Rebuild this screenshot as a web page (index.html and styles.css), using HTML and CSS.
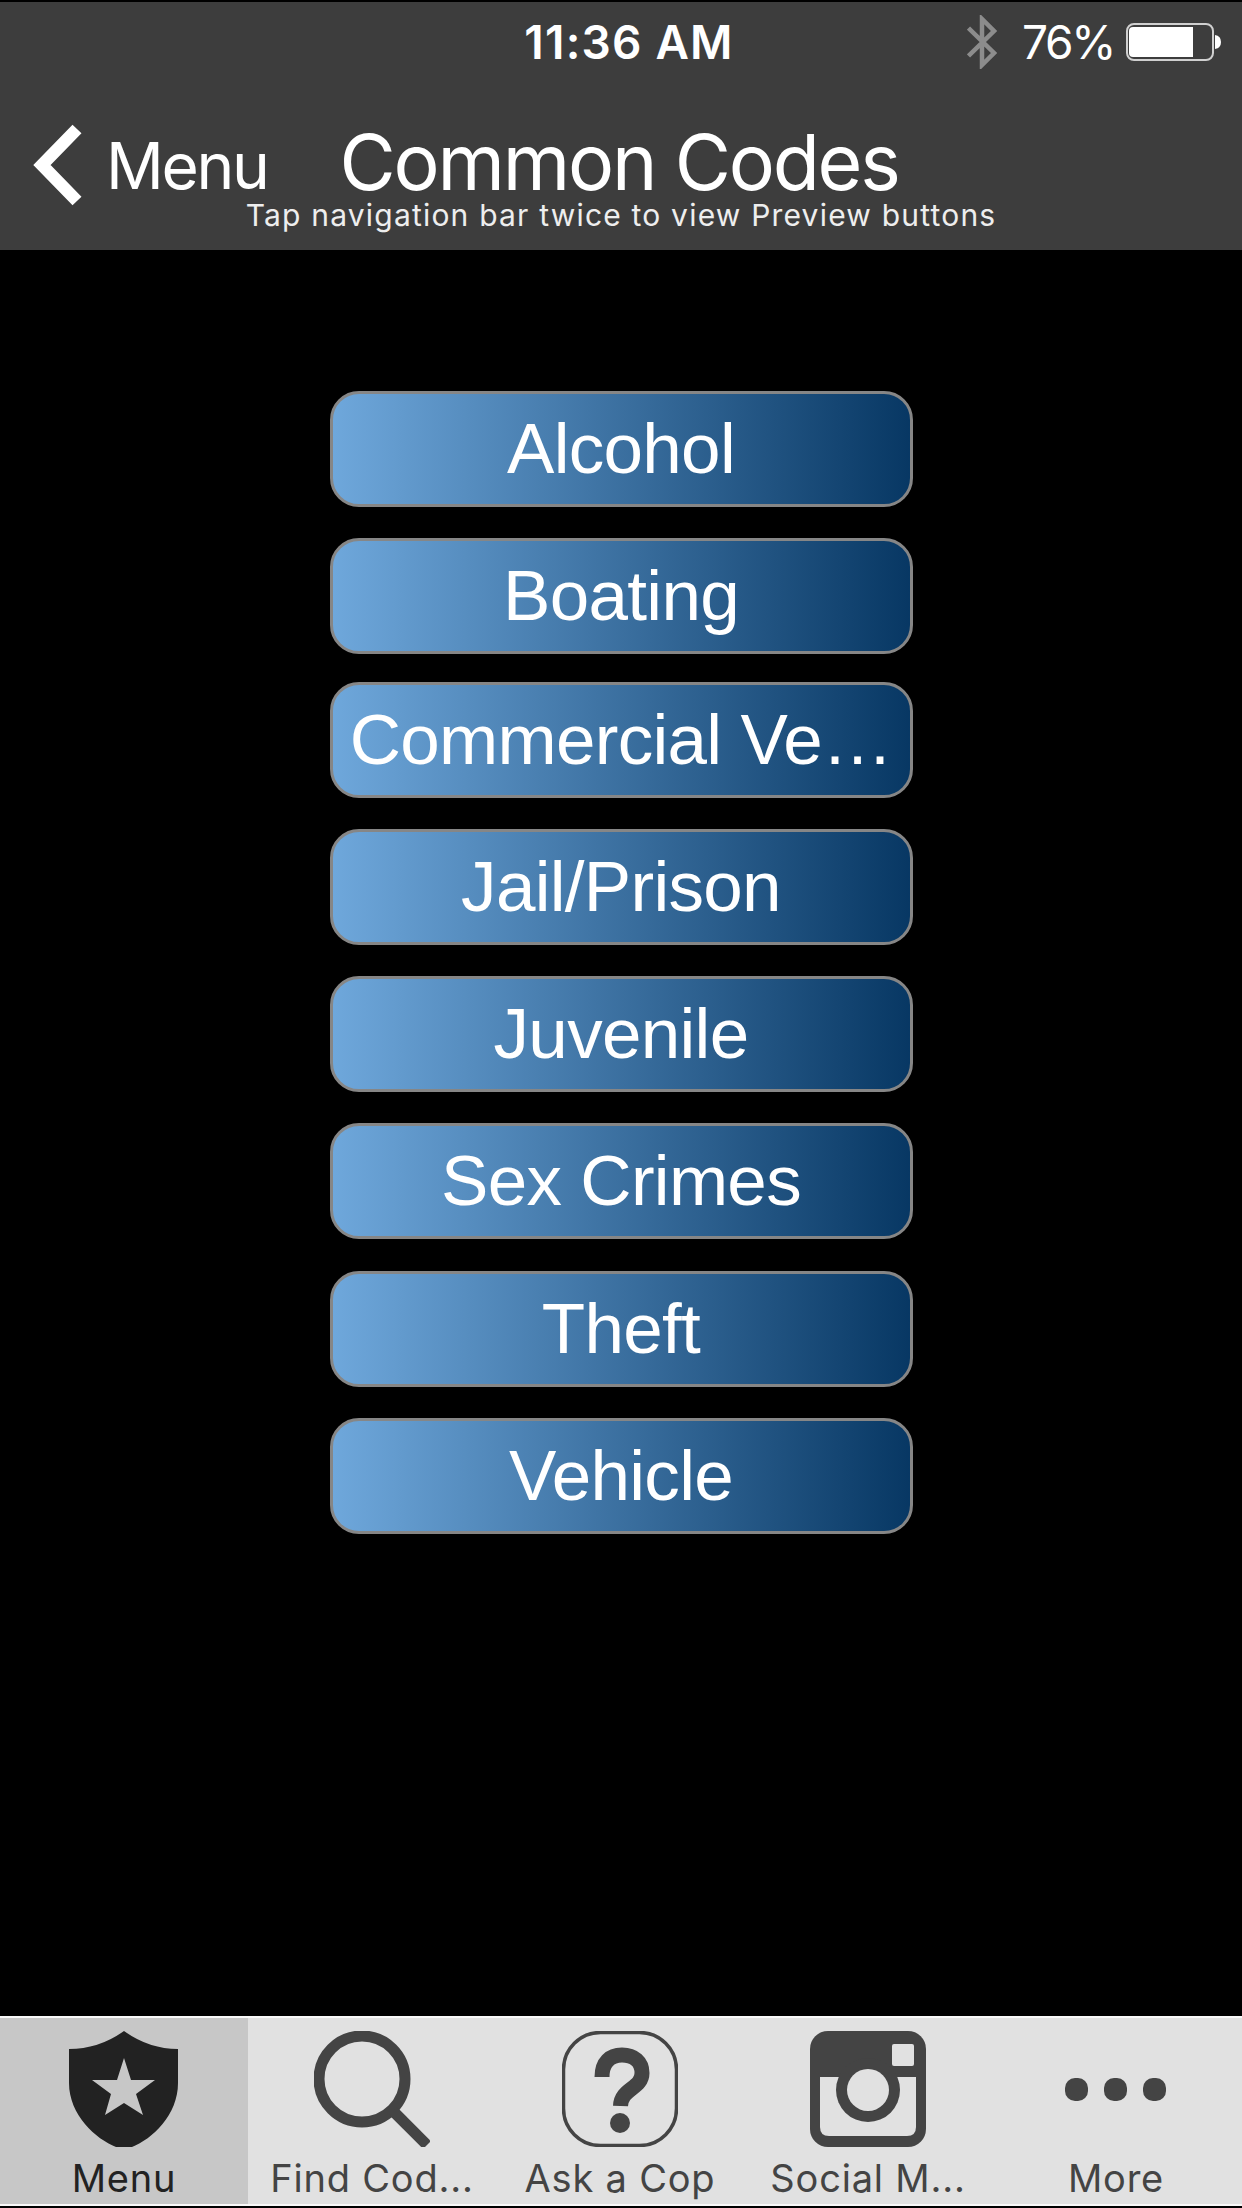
FILE: index.html
```html
<!DOCTYPE html>
<html lang="en">
<head>
    <meta charset="UTF-8">
    <meta name="viewport" content="width=device-width, initial-scale=1.0">
    <title>Common Codes</title>
    <link rel="stylesheet" href="styles.css">
</head>
<body>

    <div class="app">
        <!-- Header -->
        <header class="header">
            <div class="status-bar">
                <span class="side"></span>
                <span class="time">11:36 AM</span>
                <div class="side status-right">
                    <svg class="bluetooth" viewBox="0 0 30 54" width="30" height="54">
                        <path d="M1.500 13 L27 38 L15 50 V4 L27 16 L1.500 41" />
                    </svg>
                    <span class="percent">76%</span>
                    <svg class="battery" viewBox="0 0 96 38" width="96" height="38">
                        <rect class="battery-case" x="1" y="1" width="86" height="36" rx="7" />
                        <path class="battery-fill" d="M7 4 H67 V34 H7 Q3 34 3 30 V8 Q3 4 7 4 Z" />
                        <path class="battery-fill" d="M89 12 Q95 13 95 19 Q95 25 89 26 Z" />
                    </svg>
                </div>
            </div>

            <div class="nav-bar">
                <a class="back" href="#">
                    <svg viewBox="0 0 50 82" width="50" height="82">
                        <path d="M45 5 L10 41 L45 77" />
                    </svg>
                    <span>Menu</span>
                </a>
                <h1>Common Codes</h1>
                <span class="spacer"></span>
            </div>
            <p class="hint">Tap navigation bar twice to view Preview buttons</p>
        </header>

        <!-- Code categories -->
        <main class="codes">
            <button type="button">Alcohol</button>
            <button type="button">Boating</button>
            <button type="button" class="long">Commercial Ve…</button>
            <button type="button">Jail/Prison</button>
            <button type="button">Juvenile</button>
            <button type="button">Sex Crimes</button>
            <button type="button">Theft</button>
            <button type="button">Vehicle</button>
        </main>

        <!-- Tab Bar -->
        <nav class="tabs">
            <a class="tab active" href="#">
                <svg viewBox="0 0 116 116">
                    <path class="solid" d="M58 0 Q83 18 112 18 V52 C112 84 86 108 66 116 H50 C30 108 3 84 3 52 V18 Q33 18 58 0 Z" />
                    <path class="star" d="M58 27 L65 49 L89 49 L70 63 L77 84 L58 72 L39 84 L45 63 L26 49 L51 49 Z" />
                </svg>
                <span>Menu</span>
            </a>
            <a class="tab find" href="#">
                <svg viewBox="0 0 116 116">
                    <circle class="line" cx="48" cy="48" r="43" stroke-width="11" />
                    <path class="line" d="M79 80 L113 114" stroke-width="11" />
                </svg>
                <span>Find Cod...</span>
            </a>
            <a class="tab ask" href="#">
                <svg viewBox="0 0 116 116">
                    <rect class="line" x="1.500" y="1.500" width="113" height="113" rx="37" stroke-width="3.500" />
                    <path class="line" d="M40 46 C40 31 48 24 60 24 C72 24 80 31 80 42 C80 58 59 57 58.500 75" stroke-width="15" />
                    <circle class="solid" cx="58" cy="92" r="10" />
                </svg>
                <span>Ask a Cop</span>
            </a>
            <a class="tab social" href="#">
                <svg viewBox="0 0 116 116">
                    <rect class="solid" width="116" height="116" rx="18" />
                    <path class="hole" d="M10 46 H106 V96 Q106 105 97 105 H19 Q10 105 10 96 Z" />
                    <circle class="solid" cx="58" cy="59" r="32" />
                    <circle class="hole" cx="58" cy="59" r="21" />
                    <rect class="hole" x="82" y="13" width="22" height="22" rx="2" />
                </svg>
                <span>Social M...</span>
            </a>
            <a class="tab more" href="#">
                <svg viewBox="0 0 116 116">
                    <rect class="solid" x="7" y="47" width="23" height="23" rx="10" />
                    <rect class="solid" x="46" y="47" width="23" height="23" rx="10" />
                    <rect class="solid" x="85" y="47" width="23" height="23" rx="10" />
                </svg>
                <span>More</span>
            </a>
        </nav>
    </div>

</body>
</html>
```
FILE: styles.css
```css
* {
    margin: 0;
    padding: 0;
    box-sizing: border-box;
}

body {
    background-color: #000;
    font-family: 'Inter', sans-serif;
}

a {
    color: inherit;
    text-decoration: none;
}

svg {
    display: block;
    flex: none;
}

.app {
    display: flex;
    flex-direction: column;
    width: 1242px;
    height: 2208px;
    padding: 2px 0;
    background-color: #000;
    overflow: hidden;
}

/* Header */
.header {
    height: 248px;
    background-color: #3d3d3d;
    color: #fff;
}

.status-bar {
    display: flex;
    align-items: center;
    height: 80px;
    padding: 0 20px 0 36px;
}

.side {
    flex: 1;
}

.time {
    font-size: 46px;
    font-weight: 600;
    letter-spacing: 1.2px;
}

.status-right {
    display: flex;
    justify-content: flex-end;
    align-items: center;
}

.bluetooth {
    fill: none;
    stroke: #8c8c8c;
    stroke-width: 4.5;
    margin-right: 25px;
}

.percent {
    font-size: 46px;
    letter-spacing: -2.3px;
    margin-right: 12px;
}

.battery-case {
    fill: none;
    stroke: #d0d0d0;
    stroke-width: 2;
}

.battery-fill {
    fill: #fff;
}

.nav-bar {
    display: flex;
    align-items: center;
    height: 115px;
    padding-top: 51px;
}

.back {
    display: flex;
    align-items: center;
    width: 341px;
    padding-left: 32px;
    font-size: 64px;
    letter-spacing: -2.3px;
}

.back svg {
    fill: none;
    stroke: #fff;
    stroke-width: 12.5;
    margin-right: 24px;
}

.nav-bar h1 {
    flex: 1;
    padding-bottom: 6px;
    text-align: center;
    font-size: 77px;
    font-weight: 400;
    line-height: 66px;
    letter-spacing: -2.2px;
    white-space: nowrap;
}

.spacer {
    width: 345px;
}

.hint {
    text-align: center;
    font-size: 30px;
    line-height: 36px;
    letter-spacing: 1.2px;
    color: #eee;
}

/* Codes */
.codes {
    flex: 1;
    display: flex;
    flex-direction: column;
    align-items: center;
    gap: 31.2px;
    padding-top: 140.5px;
}

.codes button {
    width: 583px;
    height: 116px;
    border: 3px solid #868686;
    border-radius: 29px;
    background: linear-gradient(to right, #6fa8dc, #073763);
    background-origin: border-box;
    color: #fff;
    font-family: 'Liberation Sans', Arial, sans-serif;
    font-size: 71px;
    line-height: 110px;
    letter-spacing: -0.7px;
    white-space: nowrap;
}

.codes .long {
    margin-top: -3px;
}

/* Tab Bar */
.tabs {
    display: flex;
    height: 190px;
    padding-right: 2px;
    background-color: #e1e1e1;
    border-top: 2px solid #f8f8f8;
    border-bottom: 2px solid #f8f8f8;
    color: #444;
}

.tab {
    flex: 1;
    display: flex;
    flex-direction: column;
    align-items: center;
    padding-top: 13px;
    font-size: 38px;
    line-height: 46px;
    letter-spacing: 0.8px;
    white-space: nowrap;
}

.tab svg {
    width: 116px;
    height: 116px;
    margin-bottom: 8px;
}

.tab .solid {
    fill: #444;
}

.tab .line {
    fill: none;
    stroke: #444;
}

.tab .hole {
    fill: #e1e1e1;
}

.active {
    background-color: #c7c7c7;
    color: #222;
}

.active .solid {
    fill: #222;
}

.active .star {
    fill: #c7c7c7;
}
```
